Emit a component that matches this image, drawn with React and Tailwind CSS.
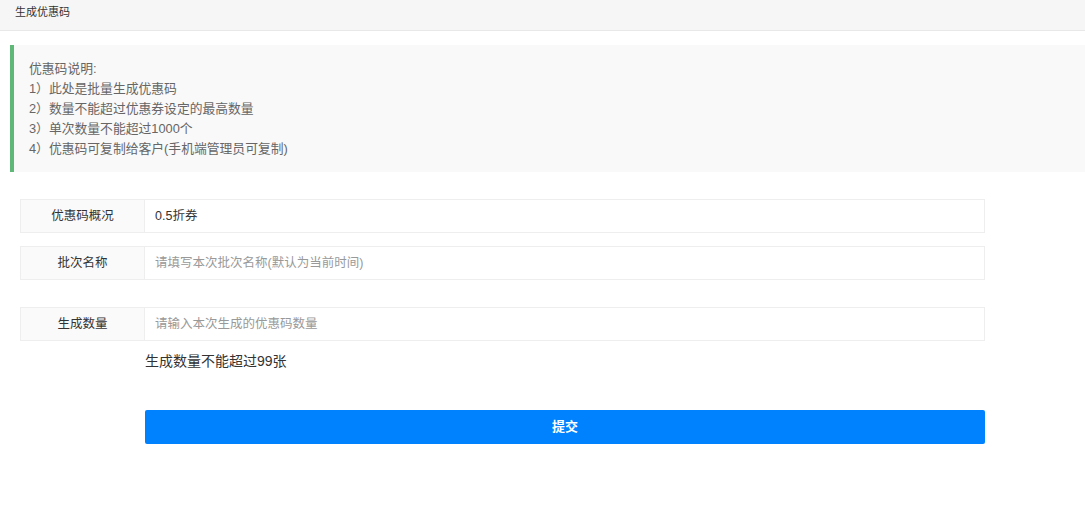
const font = { fontFamily: '"Liberation Sans", "Noto Sans CJK SC", sans-serif' };

const notes = [
  '优惠码说明:',
  '1）此处是批量生成优惠码',
  '2）数量不能超过优惠券设定的最高数量',
  '3）单次数量不能超过1000个',
  '4）优惠码可复制给客户(手机端管理员可复制)',
];

const FormRow = ({ label, value, placeholder, className = '' }) => (
  <div className={`flex h-[34px] w-[965px] ${className}`}>
    <div className="flex w-[125px] shrink-0 items-center justify-center border border-[#eeeeee] bg-[#fafafa] text-[12.5px] text-[#333]">
      {label}
    </div>
    <div className="flex flex-1 items-center border border-l-0 border-[#eeeeee] bg-white px-[10px] text-[12.5px]">
      {value ? (
        <span className="text-[#333]">{value}</span>
      ) : (
        <span className="text-[#999]">{placeholder}</span>
      )}
    </div>
  </div>
);

export default function App() {
  return (
    <div className="min-h-[523px] w-[1085px] bg-white" style={font}>
      {/* Header */}
      <div className="flex h-[31px] items-start border-b border-[#e8e8e8] bg-[#f6f6f6] pl-[15px] pt-[4px] text-[11px] text-[#333]">
        生成优惠码
      </div>

      {/* Notice */}
      <div className="ml-[10px] mt-[14px] h-[127px] border-l-[4px] border-[#5fb878] bg-[#f9f9f9] pl-[15px] pt-[14px] text-[12.8px] leading-[20px] text-[#666]">
        {notes.map((n) => (
          <div key={n}>{n}</div>
        ))}
      </div>

      {/* Form */}
      <div className="pl-[20px] pt-[27px]">
        <FormRow label="优惠码概况" value="0.5折券" />
        <FormRow label="批次名称" placeholder="请填写本次批次名称(默认为当前时间)" className="mt-[13px]" />
        <FormRow label="生成数量" placeholder="请输入本次生成的优惠码数量" className="mt-[27px]" />
        <div className="ml-[125px] mt-[10px] text-[14px] leading-[20px] text-[#333]">生成数量不能超过99张</div>
        <button className="ml-[125px] mt-[39px] flex h-[34px] w-[840px] items-center justify-center rounded-[2px] bg-[#0082ff] text-[13px] font-bold text-white">
          提交
        </button>
      </div>
    </div>
  );
}
